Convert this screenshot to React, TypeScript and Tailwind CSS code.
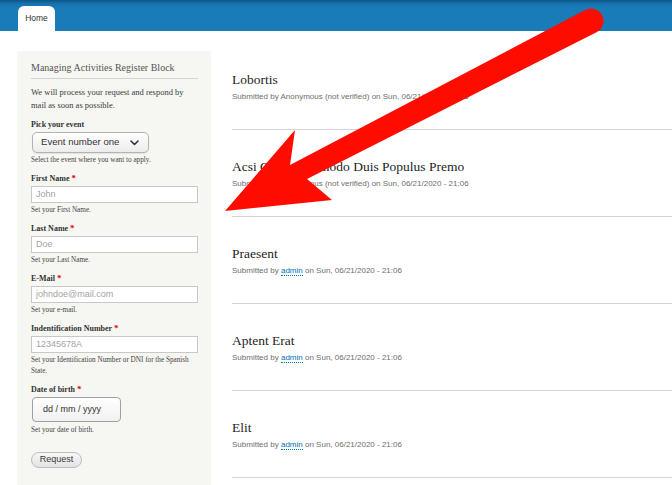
import React from "react";

const serif = "font-['Liberation_Serif',serif]";
const sans = "font-['Liberation_Sans',Arial,sans-serif]";

function Label({ text }: { text: string }) {
  return (
    <div className={`${serif} text-[8px] leading-[12px] font-bold text-[#333]`}>
      {text} <span className="text-[#e00000] text-[9px] align-top leading-[10px]">*</span>
    </div>
  );
}

function Help({ children, className = "" }: { children: React.ReactNode; className?: string }) {
  return <div className={`${serif} text-[7.2px] leading-[11px] text-[#444] ${className}`}>{children}</div>;
}

function TextField({ label, placeholder, help }: { label: string; placeholder: string; help: React.ReactNode }) {
  return (
    <div className="mt-[7.5px]">
      <Label text={label} />
      <div className="mt-px h-[17px] w-[167px] border border-[#c8c8c8] bg-white flex items-center pl-[4px]">
        <span className={`${sans} text-[9px] text-[#a3a3a3]`}>{placeholder}</span>
      </div>
      <Help className="mt-[1.5px]">{help}</Help>
    </div>
  );
}

const articles = [
  { title: "Lobortis", anon: true },
  { title: "Acsi Cogo Commodo Duis Populus Premo", anon: true },
  { title: "Praesent", anon: false },
  { title: "Aptent Erat", anon: false },
  { title: "Elit", anon: false },
];

export default function App() {
  return (
    <div className="relative w-[672px] h-[485px] overflow-hidden bg-white">
      {/* Header */}
      <div className="h-[31px] bg-[linear-gradient(to_bottom,#0d5583_0px,#1674b0_4px,#1a7bb9_8px)] flex items-end pl-[18px]">
        <div className="h-[25px] w-[37px] bg-white rounded-t-[6px] flex items-center justify-center">
          <span className={`${sans} text-[8.5px] text-[#333]`}>Home</span>
        </div>
      </div>

      <div className="flex items-start pt-[20px]">
        {/* Sidebar */}
        <div className="ml-[17px] w-[194px] h-[440px] shrink-0 bg-[#f6f6f2] pl-[14px] pr-[13px] pt-[10px]">
          <div className={`${serif} text-[10px] leading-[14px] text-[#555] pb-[3px] border-b border-[#d2d2d2]`}>
            Managing Activities Register Block
          </div>
          <div className={`${serif} text-[8.5px] leading-[13px] text-[#3b3b3b] mt-[6.5px]`}>
            We will process your request and respond by mail as soon as possible.
          </div>

          <div className="mt-[7.5px]">
            <div className={`${serif} text-[8px] leading-[12px] font-bold text-[#333]`}>Pick your event</div>
            <div className="mt-px ml-px h-[21px] w-[117px] rounded-[5px] border border-[#b3b3b3] bg-[linear-gradient(to_bottom,#ffffff,#ececec)] shadow-[0_1px_1px_rgba(0,0,0,0.08)] flex items-center justify-between pl-[8px] pr-[9px]">
              <span className={`${sans} text-[9.6px] text-[#333]`}>Event number one</span>
              <svg width="9" height="6" viewBox="0 0 9 6">
                <path d="M1 1 L4.5 4.5 L8 1" fill="none" stroke="#333" strokeWidth="1.6" strokeLinecap="round" strokeLinejoin="round" />
              </svg>
            </div>
            <Help className="mt-[1.5px]">Select the event where you want to apply.</Help>
          </div>

          <TextField label="First Name" placeholder="John" help="Set your First Name." />
          <TextField label="Last Name" placeholder="Doe" help="Set your Last Name." />
          <TextField label="E-Mail" placeholder="johndoe@mail.com" help="Set your e-mail." />
          <TextField
            label="Indentification Number"
            placeholder="12345678A"
            help="Set your Identification Number or DNI for the Spanish State."
          />

          <div className="mt-[7.5px]">
            <Label text="Date of birth" />
            <div className="mt-px ml-px h-[25px] w-[89px] rounded-[4px] border border-[#a0a0a0] bg-[linear-gradient(to_bottom,#ffffff,#f1f1f1)] flex items-center pl-[10px]">
              <span className={`${sans} text-[9px] text-[#333]`}>dd / mm / yyyy</span>
            </div>
            <Help className="mt-[2.5px]">Set your date of birth.</Help>
          </div>

          <div className="mt-[16px] h-[16px] w-[51px] rounded-full border border-[#bdbdbd] bg-[linear-gradient(to_bottom,#f8f8f8,#e3e3e3)] flex items-center justify-center">
            <span className={`${sans} text-[9px] text-[#3a3a3a]`}>Request</span>
          </div>
        </div>

        {/* Content */}
        <div className="ml-[21px] flex-1">
          {articles.map((a, i) => (
            <div
              key={a.title}
              className={`${i === 0 ? "pt-[19px]" : "pt-[27px]"} pb-[26px] border-b border-[#d4d4d4]`}
            >
              <div className={`${serif} text-[13.5px] leading-[20px] text-[#1e1e1e]`}>{a.title}</div>
              <div className={`${sans} text-[8px] leading-[13px] text-[#6e6e6e]`}>
                Submitted by{" "}
                {a.anon ? (
                  "Anonymous (not verified)"
                ) : (
                  <span className="text-[#0071b3] border-b border-dotted border-[#0071b3]">admin</span>
                )}{" "}
                on Sun, 06/21/2020 - 21:06
              </div>
            </div>
          ))}
        </div>
      </div>

      {/* Red annotation arrow */}
      <svg className="absolute inset-0 pointer-events-none" width="672" height="485" viewBox="0 0 672 485">
        <path
          d="M295,130 L225,211 L332,200 L307,179 L597,32 A12.5,12.5 0 0 0 585,10 L290,165 Z"
          fill="#ff0c00"
        />
      </svg>
    </div>
  );
}
